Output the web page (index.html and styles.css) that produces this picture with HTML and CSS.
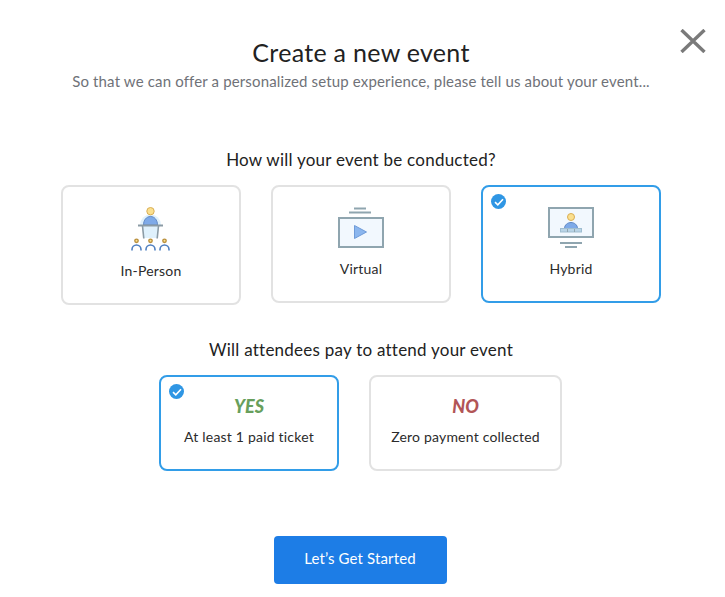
FILE: index.html
```html
<!DOCTYPE html>
<html lang="en">
<head>
    <meta charset="UTF-8">
    <meta name="viewport" content="width=device-width, initial-scale=1.0">
    <title>Create a new event</title>
    <link rel="stylesheet" href="styles.css">
</head>
<body>
    <div class="modal">
        <svg class="close" width="26" height="24" viewBox="0 0 26 24">
            <path d="M1.500 1L24.500 23M24.500 1L1.500 23" fill="none" stroke="#7a7a7a" stroke-width="3.400"/>
        </svg>

        <h1>Create a new event</h1>
        <p class="subtitle">So that we can offer a personalized setup experience, please tell us about your event...</p>

        <h2 class="question">How will your event be conducted?</h2>
        <div class="options">
            <div class="card card-tall">
                <svg class="icon" width="40" height="44" viewBox="0 0 40 44">
                    <path d="M9 18a10.500 10.500 0 0 1 21 0z" fill="#dff1fc"/>
                    <path d="M11 18h17l-1.500 13h-14z" fill="#dff1fc"/>
                    <circle cx="19.500" cy="4.200" r="3.700" fill="#fbe08f" stroke="#d9ae55"/>
                    <path d="M12.500 18c0-5 3-8.500 7-8.500s7 3.500 7 8.500z" fill="#7eaae8" stroke="#5f88c4"/>
                    <path d="M7 18.500h25" stroke="#8b9ba5" stroke-width="2"/>
                    <path d="M11.500 19l1.300 12.500M27.500 19l-1.300 12.500" stroke="#8b9ba5" stroke-width="1.600"/>
                    <g fill="#fbe08f" stroke="#b98f3c" stroke-width="1.400">
                        <circle cx="5.500" cy="33.800" r="1.700"/>
                        <circle cx="19.500" cy="33.800" r="1.700"/>
                        <circle cx="33.500" cy="33.800" r="1.700"/>
                    </g>
                    <g fill="none" stroke="#4f7fc0" stroke-width="1.600">
                        <path d="M1 43.500v-1a4.500 4.500 0 0 1 9 0v1"/>
                        <path d="M15 43.500v-1a4.500 4.500 0 0 1 9 0v1"/>
                        <path d="M29 43.500v-1a4.500 4.500 0 0 1 9 0v1"/>
                    </g>
                </svg>
                <span class="label label-tall">In-Person</span>
            </div>
            <div class="card">
                <svg class="icon" width="46" height="41" viewBox="0 0 46 41">
                    <path d="M16 1.500h12M11 5.500h22" stroke="#8fa5af" stroke-width="2"/>
                    <rect x="1" y="11" width="44" height="29" fill="#f2f8fe" stroke="#8fa5af" stroke-width="2"/>
                    <path d="M16.500 18.500l12 6.500-12 6.500z" fill="#8bb6ee" stroke="#6f9bd8"/>
                </svg>
                <span class="label">Virtual</span>
            </div>
            <div class="card selected">
                <span class="check"><svg width="10" height="8" viewBox="0 0 10 8"><path d="M1 4.200l2.800 2.600L9 1.200" fill="none" stroke="#fff" stroke-width="1.600"/></svg></span>
                <svg class="icon" width="46" height="41" viewBox="0 0 46 41">
                    <rect x="1" y="1" width="44" height="29" fill="#f2f8fe" stroke="#8fa5af" stroke-width="2"/>
                    <circle cx="23" cy="10" r="3.500" fill="#fbe08f" stroke="#d9ae55"/>
                    <path d="M16.500 21.500c0-3.500 3-6 6.500-6s6.500 2.500 6.500 6z" fill="#7eaae8" stroke="#5f88c4"/>
                    <rect x="12.500" y="21.500" width="21" height="3.500" fill="#b9d4e6" stroke="#9fbdd0"/>
                    <path d="M19.500 22v3M26.500 22v3" stroke="#8fa5af"/>
                    <path d="M12 36h22" stroke="#8fa5af" stroke-width="2"/>
                    <path d="M17 40h12" stroke="#8fa5af" stroke-width="2"/>
                </svg>
                <span class="label">Hybrid</span>
            </div>
        </div>

        <h2 class="question question-pay">Will attendees pay to attend your event</h2>
        <div class="options options-pay">
            <div class="card card-pay selected">
                <span class="check check-pay"><svg width="10" height="8" viewBox="0 0 10 8"><path d="M1 4.200l2.800 2.600L9 1.200" fill="none" stroke="#fff" stroke-width="1.600"/></svg></span>
                <span class="answer yes">YES</span>
                <span class="label">At least 1 paid ticket</span>
            </div>
            <div class="card card-pay card-wide">
                <span class="answer no">NO</span>
                <span class="label">Zero payment collected</span>
            </div>
        </div>

        <button class="start">Let’s Get Started</button>
    </div>
</body>
</html>
```

FILE: styles.css
```css
body {
    margin: 0;
    background: #fff;
    font-family: Lato, "Open Sans", sans-serif;
    color: #2b2b2b;
}
.modal {
    position: relative;
    box-sizing: border-box;
    width: 722px;
    height: 597px;
    padding-top: 37px;
    display: flex;
    flex-direction: column;
    align-items: center;
    text-align: center;
}
.close {
    position: absolute;
    left: 680px;
    top: 29px;
}
h1 {
    margin: 0;
    font-size: 25px;
    line-height: 30px;
    font-weight: 400;
    letter-spacing: 0.3px;
    color: #222;
}
.subtitle {
    margin: 4px 0 0;
    font-size: 15px;
    line-height: 20px;
    letter-spacing: 0.15px;
    color: #6f7278;
}
.question {
    margin: 58px 0 14px;
    font-size: 17px;
    line-height: 22px;
    font-weight: 400;
    letter-spacing: 0.24px;
    color: #222;
}
.question-pay {
    margin: 34px 0 14px;
}
.options {
    display: flex;
    justify-content: center;
    align-items: flex-start;
    gap: 30px;
}
.options-pay {
    margin-right: 1px;
}
.card {
    position: relative;
    box-sizing: border-box;
    width: 180px;
    height: 118px;
    padding-top: 20px;
    border: 2px solid #e2e2e2;
    border-radius: 8px;
    display: flex;
    flex-direction: column;
    align-items: center;
}
.card-tall {
    height: 120px;
}
.card-pay {
    height: 96px;
    padding-top: 19px;
}
.card-wide {
    width: 193px;
}
.selected {
    border-color: #329de8;
}
.icon {
    display: block;
}
.label {
    margin-top: 12px;
    font-size: 14px;
    line-height: 18px;
    letter-spacing: 0.2px;
    color: #2b2b2b;
}
.label-tall {
    margin-top: 11px;
}
.check {
    position: absolute;
    left: 8px;
    top: 7px;
    width: 15px;
    height: 15px;
    border-radius: 50%;
    background: #2f96e4;
    display: flex;
    align-items: center;
    justify-content: center;
}
.answer {
    font-size: 18px;
    line-height: 20px;
    font-weight: 900;
    font-style: italic;
}
.yes {
    color: #689f5c;
}
.no {
    color: #b25557;
}
.start {
    margin: 65px 2px 0 0;
    padding: 0 0 4px;
    width: 173px;
    height: 48px;
    border: 0;
    border-radius: 4px;
    background: #1d7de6;
    color: #fff;
    font-family: inherit;
    font-size: 15px;
    letter-spacing: 0.13px;
}
```
